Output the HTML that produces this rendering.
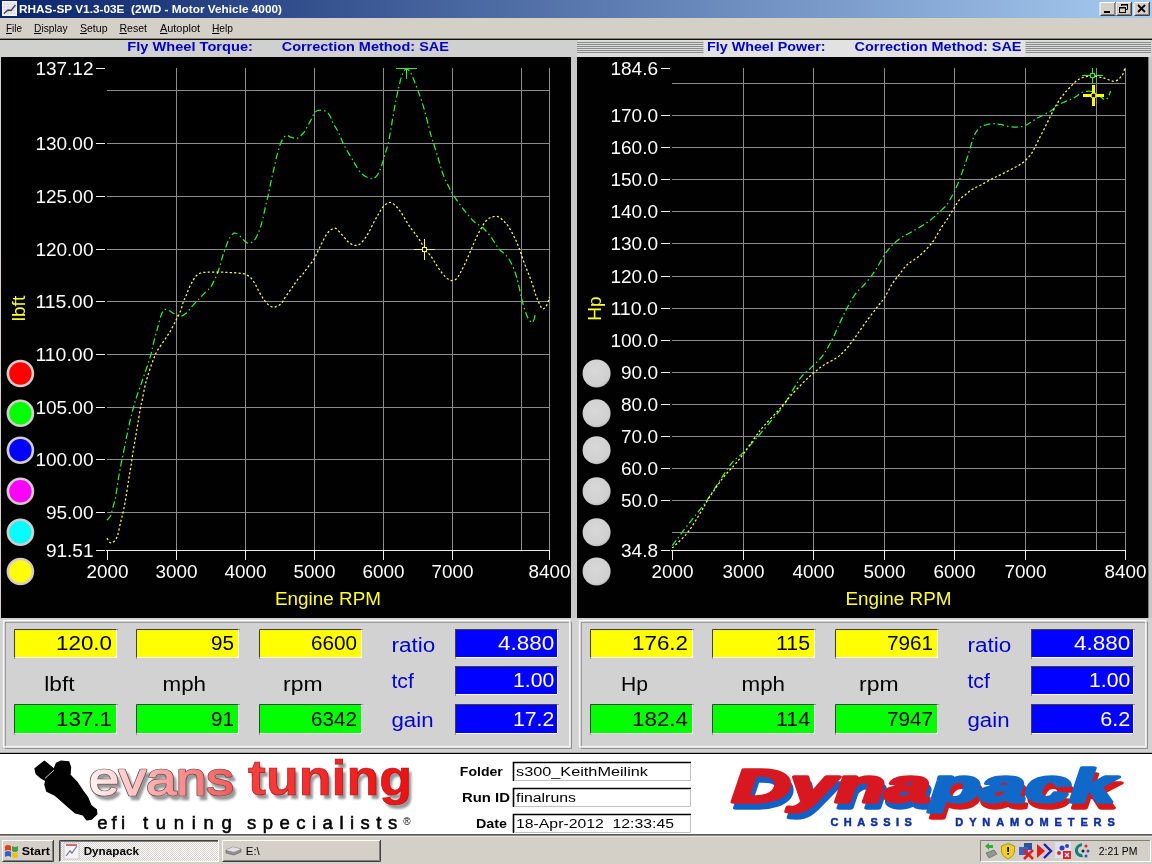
<!DOCTYPE html><html><head><meta charset="utf-8"><title>Dynapack</title>
<style>html,body{margin:0;padding:0;background:#d4d0c8;overflow:hidden}svg{display:block;will-change:transform;opacity:.999}text{font-family:"Liberation Sans",sans-serif;white-space:pre}</style></head><body>
<svg width="1152" height="864" viewBox="0 0 1152 864">
<defs>
<linearGradient id="tb" x1="0" x2="1" y1="0" y2="0"><stop offset="0" stop-color="#0a246a"/><stop offset="1" stop-color="#a6caf0"/></linearGradient>
<pattern id="stripe" width="4" height="2" patternUnits="userSpaceOnUse"><rect width="4" height="2" fill="#dcdcdc"/><rect y="0" width="4" height="1" fill="#8a8a8a"/></pattern>
<pattern id="chk" width="2" height="2" patternUnits="userSpaceOnUse"><rect width="2" height="2" fill="#ffffff"/><rect width="1" height="1" fill="#d4d0c8"/><rect x="1" y="1" width="1" height="1" fill="#d4d0c8"/></pattern>
<linearGradient id="ev1" x1="0" x2="1"><stop offset="0" stop-color="#fff4f4"/><stop offset="1" stop-color="#f85858"/></linearGradient>
<linearGradient id="ev2" x1="0" x2="1"><stop offset="0" stop-color="#f84040"/><stop offset="1" stop-color="#ec1010"/></linearGradient>
<radialGradient id="gb" cx=".45" cy=".4" r=".6"><stop offset="0" stop-color="#d8d8d8"/><stop offset=".85" stop-color="#d0d0d0"/><stop offset="1" stop-color="#bcbcbc"/></radialGradient>
<filter id="sh" x="-5%" y="-10%" width="115%" height="130%"><feGaussianBlur stdDeviation="1.2"/></filter>
</defs>
<rect width="1152" height="864" fill="#d4d0c8"/>
<rect x="0" y="0" width="1152" height="18" fill="url(#tb)"/>
<rect x="2" y="1" width="15" height="15" fill="#f6f4fa"/><path d="M3 4h13M3 7h13M3 10h13M3 13h13M5 2v13M8 2v13M11 2v13M14 2v13" stroke="#d2d0e0" stroke-width=".7" fill="none"/><path d="M6 11l3-2l3 1l-3 2z" fill="#d8d0a0"/><path d="M4 13.5L8 10L11 10.5L15.5 5" stroke="#404058" stroke-width="1.3" fill="none"/>
<text x="19" y="13" font-size="11.5" fill="#ffffff" text-anchor="start" font-weight="bold" textLength="263" lengthAdjust="spacingAndGlyphs" >RHAS-SP V1.3-03E  (2WD - Motor Vehicle 4000)</text>
<rect x="1100" y="2" width="16" height="14" fill="#d4d0c8"/>
<path d="M1100 15.5V2.5H1115" stroke="#ffffff" fill="none"/>
<path d="M1100.5 15.5H1115.5V2" stroke="#404040" fill="none"/>
<path d="M1101.5 14.5H1114.5V3" stroke="#808080" fill="none"/>
<rect x="1104" y="11" width="6" height="2" fill="#000"/>
<rect x="1116" y="2" width="16" height="14" fill="#d4d0c8"/>
<path d="M1116 15.5V2.5H1131" stroke="#ffffff" fill="none"/>
<path d="M1116.5 15.5H1131.5V2" stroke="#404040" fill="none"/>
<path d="M1117.5 14.5H1130.5V3" stroke="#808080" fill="none"/>
<path d="M1121.5 6V4.5h6v5H1126" stroke="#000" fill="none"/><rect x="1121" y="4" width="7" height="1.5" fill="#000"/>
<rect x="1119.5" y="7.5" width="6" height="5" stroke="#000" fill="none"/><rect x="1119" y="7" width="7" height="1.5" fill="#000"/>
<rect x="1134" y="2" width="16" height="14" fill="#d4d0c8"/>
<path d="M1134 15.5V2.5H1149" stroke="#ffffff" fill="none"/>
<path d="M1134.5 15.5H1149.5V2" stroke="#404040" fill="none"/>
<path d="M1135.5 14.5H1148.5V3" stroke="#808080" fill="none"/>
<path d="M1138 5l7 7M1145 5l-7 7" stroke="#000" stroke-width="1.8" fill="none"/>
<text x="6" y="32" font-size="11.5" fill="#000" text-anchor="start" font-weight="normal" textLength="16" lengthAdjust="spacingAndGlyphs" >File</text>
<text x="34" y="32" font-size="11.5" fill="#000" text-anchor="start" font-weight="normal" textLength="33.5" lengthAdjust="spacingAndGlyphs" >Display</text>
<text x="80" y="32" font-size="11.5" fill="#000" text-anchor="start" font-weight="normal" textLength="27.5" lengthAdjust="spacingAndGlyphs" >Setup</text>
<text x="119.5" y="32" font-size="11.5" fill="#000" text-anchor="start" font-weight="normal" textLength="27.5" lengthAdjust="spacingAndGlyphs" >Reset</text>
<text x="160" y="32" font-size="11.5" fill="#000" text-anchor="start" font-weight="normal" textLength="40" lengthAdjust="spacingAndGlyphs" >Autoplot</text>
<text x="212" y="32" font-size="11.5" fill="#000" text-anchor="start" font-weight="normal" textLength="21" lengthAdjust="spacingAndGlyphs" >Help</text>
<rect x="6" y="33" width="6" height="1" fill="#000"/>
<rect x="34" y="33" width="7.5" height="1" fill="#000"/>
<rect x="80" y="33" width="7" height="1" fill="#000"/>
<rect x="119.5" y="33" width="7.5" height="1" fill="#000"/>
<rect x="160" y="33" width="7.5" height="1" fill="#000"/>
<rect x="212" y="33" width="7.5" height="1" fill="#000"/>
<rect x="0" y="38.6" width="1152" height="1.4" fill="#101010"/>
<rect x="0" y="40" width="1152" height="17" fill="#d0d0d0"/>
<rect x="577" y="40" width="574" height="17" fill="#dcdcdc"/>
<rect x="577" y="42" width="574" height="11" fill="url(#stripe)"/>
<rect x="703.5" y="40" width="322" height="17" fill="#e2e2e2"/>
<text x="127.3" y="50.7" font-size="13" fill="#0000c8" text-anchor="start" font-weight="bold" textLength="125.6" lengthAdjust="spacingAndGlyphs" >Fly Wheel Torque:</text>
<text x="281.7" y="50.7" font-size="13" fill="#0000c8" text-anchor="start" font-weight="bold" textLength="167.2" lengthAdjust="spacingAndGlyphs" >Correction Method: SAE</text>
<text x="707" y="50.7" font-size="13" fill="#0000c8" text-anchor="start" font-weight="bold" textLength="118.5" lengthAdjust="spacingAndGlyphs" >Fly Wheel Power:</text>
<text x="854.5" y="50.7" font-size="13" fill="#0000c8" text-anchor="start" font-weight="bold" textLength="167" lengthAdjust="spacingAndGlyphs" >Correction Method: SAE</text>
<rect x="1" y="57" width="570" height="561" fill="#000"/>
<rect x="577" y="57" width="571.6" height="561.6" fill="#000"/>
<rect x="571" y="57" width="6" height="561" fill="#c8c8c8"/>
<rect x="1148.6" y="57" width="4" height="561" fill="#c8c8c8"/>
<path d="M176.5 68V550M245.5 68V550M314.5 68V550M383.5 68V550M452.5 68V550M521.5 68V550M549.5 68V550M107 90.5H550M107 143.5H550M107 196.5H550M107 249.5H550M107 301.5H550M107 354.5H550M107 407.5H550M107 459.5H550M107 512.5H550" stroke="#8c8c8c" stroke-width="1" fill="none" shape-rendering="crispEdges"/>
<path d="M106 550.5H550" stroke="#e8e8e8" stroke-width="1" shape-rendering="crispEdges"/>
<path d="M107.5 550V560M176.5 550V560M245.5 550V560M314.5 550V560M383.5 550V560M452.5 550V560M549.5 550V560M96 68.5H105M96 143.5H105M96 196.5H105M96 249.5H105M96 301.5H105M96 354.5H105M96 407.5H105M96 459.5H105M96 512.5H105M96 550.5H105" stroke="#f0f0f0" stroke-width="1" shape-rendering="crispEdges"/>
<text x="93.5" y="74.8" font-size="19" fill="#fff" text-anchor="end" font-weight="normal" textLength="58.1" lengthAdjust="spacingAndGlyphs" >137.12</text>
<text x="93.5" y="149.8" font-size="19" fill="#fff" text-anchor="end" font-weight="normal" textLength="58.1" lengthAdjust="spacingAndGlyphs" >130.00</text>
<text x="93.5" y="202.8" font-size="19" fill="#fff" text-anchor="end" font-weight="normal" textLength="58.1" lengthAdjust="spacingAndGlyphs" >125.00</text>
<text x="93.5" y="255.8" font-size="19" fill="#fff" text-anchor="end" font-weight="normal" textLength="58.1" lengthAdjust="spacingAndGlyphs" >120.00</text>
<text x="93.5" y="307.8" font-size="19" fill="#fff" text-anchor="end" font-weight="normal" textLength="58.1" lengthAdjust="spacingAndGlyphs" >115.00</text>
<text x="93.5" y="360.8" font-size="19" fill="#fff" text-anchor="end" font-weight="normal" textLength="58.1" lengthAdjust="spacingAndGlyphs" >110.00</text>
<text x="93.5" y="413.8" font-size="19" fill="#fff" text-anchor="end" font-weight="normal" textLength="58.1" lengthAdjust="spacingAndGlyphs" >105.00</text>
<text x="93.5" y="465.8" font-size="19" fill="#fff" text-anchor="end" font-weight="normal" textLength="58.1" lengthAdjust="spacingAndGlyphs" >100.00</text>
<text x="93.5" y="518.8" font-size="19" fill="#fff" text-anchor="end" font-weight="normal" textLength="47.6" lengthAdjust="spacingAndGlyphs" >95.00</text>
<text x="93.5" y="556.8" font-size="19" fill="#fff" text-anchor="end" font-weight="normal" textLength="47.6" lengthAdjust="spacingAndGlyphs" >91.51</text>
<text x="107.5" y="577.5" font-size="19" fill="#fff" text-anchor="middle" font-weight="normal" textLength="42" lengthAdjust="spacingAndGlyphs" >2000</text>
<text x="176.5" y="577.5" font-size="19" fill="#fff" text-anchor="middle" font-weight="normal" textLength="42" lengthAdjust="spacingAndGlyphs" >3000</text>
<text x="245.5" y="577.5" font-size="19" fill="#fff" text-anchor="middle" font-weight="normal" textLength="42" lengthAdjust="spacingAndGlyphs" >4000</text>
<text x="314.5" y="577.5" font-size="19" fill="#fff" text-anchor="middle" font-weight="normal" textLength="42" lengthAdjust="spacingAndGlyphs" >5000</text>
<text x="383.5" y="577.5" font-size="19" fill="#fff" text-anchor="middle" font-weight="normal" textLength="42" lengthAdjust="spacingAndGlyphs" >6000</text>
<text x="452.5" y="577.5" font-size="19" fill="#fff" text-anchor="middle" font-weight="normal" textLength="42" lengthAdjust="spacingAndGlyphs" >7000</text>
<text x="549.5" y="577.5" font-size="19" fill="#fff" text-anchor="middle" font-weight="normal" textLength="42" lengthAdjust="spacingAndGlyphs" >8400</text>
<text x="328.0" y="605" font-size="18" fill="#ffff30" text-anchor="middle" font-weight="normal" textLength="106" lengthAdjust="spacingAndGlyphs" >Engine RPM</text>
<text transform="translate(24.5,308.5) rotate(-90)" font-size="19" fill="#ffff30" text-anchor="middle">lbft</text>
<path d="M743.5 68V550M813.5 68V550M884.5 68V550M954.5 68V550M1025.5 68V550M1096.5 68V550M1125.5 68V550M672 83.5H1126M672 115.5H1126M672 147.5H1126M672 179.5H1126M672 211.5H1126M672 243.5H1126M672 276.5H1126M672 308.5H1126M672 340.5H1126M672 372.5H1126M672 404.5H1126M672 436.5H1126M672 468.5H1126M672 500.5H1126M672 532.5H1126" stroke="#8c8c8c" stroke-width="1" fill="none" shape-rendering="crispEdges"/>
<path d="M671 550.5H1126" stroke="#e8e8e8" stroke-width="1" shape-rendering="crispEdges"/>
<path d="M672.5 550V560M743.5 550V560M813.5 550V560M884.5 550V560M954.5 550V560M1025.5 550V560M1125.5 550V560M661 68.5H670M661 115.5H670M661 147.5H670M661 179.5H670M661 211.5H670M661 243.5H670M661 276.5H670M661 308.5H670M661 340.5H670M661 372.5H670M661 404.5H670M661 436.5H670M661 468.5H670M661 500.5H670M661 550.5H670" stroke="#f0f0f0" stroke-width="1" shape-rendering="crispEdges"/>
<text x="658" y="74.8" font-size="19" fill="#fff" text-anchor="end" font-weight="normal" textLength="47.6" lengthAdjust="spacingAndGlyphs" >184.6</text>
<text x="658" y="121.8" font-size="19" fill="#fff" text-anchor="end" font-weight="normal" textLength="47.6" lengthAdjust="spacingAndGlyphs" >170.0</text>
<text x="658" y="153.8" font-size="19" fill="#fff" text-anchor="end" font-weight="normal" textLength="47.6" lengthAdjust="spacingAndGlyphs" >160.0</text>
<text x="658" y="185.8" font-size="19" fill="#fff" text-anchor="end" font-weight="normal" textLength="47.6" lengthAdjust="spacingAndGlyphs" >150.0</text>
<text x="658" y="217.8" font-size="19" fill="#fff" text-anchor="end" font-weight="normal" textLength="47.6" lengthAdjust="spacingAndGlyphs" >140.0</text>
<text x="658" y="249.8" font-size="19" fill="#fff" text-anchor="end" font-weight="normal" textLength="47.6" lengthAdjust="spacingAndGlyphs" >130.0</text>
<text x="658" y="282.8" font-size="19" fill="#fff" text-anchor="end" font-weight="normal" textLength="47.6" lengthAdjust="spacingAndGlyphs" >120.0</text>
<text x="658" y="314.8" font-size="19" fill="#fff" text-anchor="end" font-weight="normal" textLength="47.6" lengthAdjust="spacingAndGlyphs" >110.0</text>
<text x="658" y="346.8" font-size="19" fill="#fff" text-anchor="end" font-weight="normal" textLength="47.6" lengthAdjust="spacingAndGlyphs" >100.0</text>
<text x="658" y="378.8" font-size="19" fill="#fff" text-anchor="end" font-weight="normal" textLength="37.0" lengthAdjust="spacingAndGlyphs" >90.0</text>
<text x="658" y="410.8" font-size="19" fill="#fff" text-anchor="end" font-weight="normal" textLength="37.0" lengthAdjust="spacingAndGlyphs" >80.0</text>
<text x="658" y="442.8" font-size="19" fill="#fff" text-anchor="end" font-weight="normal" textLength="37.0" lengthAdjust="spacingAndGlyphs" >70.0</text>
<text x="658" y="474.8" font-size="19" fill="#fff" text-anchor="end" font-weight="normal" textLength="37.0" lengthAdjust="spacingAndGlyphs" >60.0</text>
<text x="658" y="506.8" font-size="19" fill="#fff" text-anchor="end" font-weight="normal" textLength="37.0" lengthAdjust="spacingAndGlyphs" >50.0</text>
<text x="658" y="556.8" font-size="19" fill="#fff" text-anchor="end" font-weight="normal" textLength="37.0" lengthAdjust="spacingAndGlyphs" >34.8</text>
<text x="672.5" y="577.5" font-size="19" fill="#fff" text-anchor="middle" font-weight="normal" textLength="42" lengthAdjust="spacingAndGlyphs" >2000</text>
<text x="743.5" y="577.5" font-size="19" fill="#fff" text-anchor="middle" font-weight="normal" textLength="42" lengthAdjust="spacingAndGlyphs" >3000</text>
<text x="813.5" y="577.5" font-size="19" fill="#fff" text-anchor="middle" font-weight="normal" textLength="42" lengthAdjust="spacingAndGlyphs" >4000</text>
<text x="884.5" y="577.5" font-size="19" fill="#fff" text-anchor="middle" font-weight="normal" textLength="42" lengthAdjust="spacingAndGlyphs" >5000</text>
<text x="954.5" y="577.5" font-size="19" fill="#fff" text-anchor="middle" font-weight="normal" textLength="42" lengthAdjust="spacingAndGlyphs" >6000</text>
<text x="1025.5" y="577.5" font-size="19" fill="#fff" text-anchor="middle" font-weight="normal" textLength="42" lengthAdjust="spacingAndGlyphs" >7000</text>
<text x="1125.5" y="577.5" font-size="19" fill="#fff" text-anchor="middle" font-weight="normal" textLength="42" lengthAdjust="spacingAndGlyphs" >8400</text>
<text x="898.5" y="605" font-size="18" fill="#ffff30" text-anchor="middle" font-weight="normal" textLength="106" lengthAdjust="spacingAndGlyphs" >Engine RPM</text>
<text transform="translate(601,308.5) rotate(-90)" font-size="19" fill="#ffff30" text-anchor="middle">Hp</text>
<path d="M107.0 520.0C107.6 519.2 109.9 517.3 110.8 515.5C111.7 513.7 111.7 512.1 112.5 509.0C113.3 505.9 114.5 502.7 115.6 497.0C116.7 491.3 117.9 481.2 119.0 475.0C120.1 468.8 120.8 465.3 122.0 459.5C123.2 453.7 124.9 445.4 126.0 440.0C127.1 434.6 127.6 431.5 128.6 427.0C129.6 422.5 130.8 417.5 132.0 413.0C133.2 408.5 133.8 405.5 135.6 400.0C137.3 394.5 140.2 386.8 142.5 380.0C144.8 373.2 147.6 365.7 149.5 359.4C151.4 353.1 152.4 347.5 153.8 342.0C155.2 336.5 156.7 331.1 158.0 326.4C159.3 321.7 160.4 316.8 161.6 314.0C162.8 311.2 163.7 309.9 165.0 309.4C166.3 308.9 167.8 310.0 169.4 310.8C171.0 311.6 172.7 313.1 174.6 314.0C176.5 314.9 178.7 316.6 180.7 316.3C182.7 316.1 184.9 314.1 186.8 312.5C188.7 310.9 190.1 308.5 192.0 306.4C193.9 304.3 195.7 302.4 198.0 300.0C200.3 297.6 203.8 293.9 206.0 291.7C208.2 289.4 209.4 288.8 211.0 286.5C212.6 284.2 214.0 281.1 215.5 277.8C217.0 274.5 218.7 270.0 219.8 266.5C221.0 263.0 221.6 259.8 222.4 257.0C223.2 254.2 223.8 252.7 224.8 250.0C225.8 247.3 227.0 243.5 228.2 241.0C229.3 238.5 230.5 236.3 231.7 235.0C232.9 233.7 233.8 232.8 235.2 233.0C236.6 233.2 238.8 235.1 240.4 236.5C242.0 237.9 243.3 240.1 244.7 241.2C246.1 242.3 247.4 243.5 249.0 243.3C250.6 243.2 252.9 241.8 254.3 240.3C255.8 238.8 256.6 236.6 257.7 234.3C258.8 232.0 259.8 229.2 260.7 226.5C261.6 223.8 262.2 221.1 263.0 217.8C263.8 214.5 264.7 210.0 265.5 206.5C266.3 203.0 267.1 199.9 267.8 197.0C268.5 194.1 268.9 192.1 269.5 189.0C270.1 185.9 270.9 181.7 271.6 178.5C272.3 175.3 273.0 172.8 273.7 169.9C274.4 167.0 274.9 164.2 275.6 161.2C276.3 158.1 277.1 154.8 278.0 151.6C278.9 148.4 280.1 144.5 281.2 142.0C282.3 139.5 283.6 137.6 284.7 136.5C285.8 135.4 286.6 135.4 287.6 135.5C288.6 135.6 289.2 136.7 290.7 137.2C292.2 137.7 295.1 138.6 296.8 138.3C298.5 138.0 299.7 136.6 301.0 135.5C302.3 134.4 303.6 133.1 304.6 131.7C305.6 130.2 306.2 128.7 307.2 126.8C308.2 124.9 309.5 122.6 310.7 120.4C311.9 118.2 313.0 115.1 314.2 113.4C315.4 111.8 316.0 111.0 317.6 110.5C319.2 110.0 321.8 109.9 323.7 110.5C325.6 111.1 327.4 112.1 329.0 114.3C330.6 116.5 332.0 120.9 333.6 123.9C335.2 126.9 336.9 129.2 338.5 132.5C340.1 135.8 341.9 140.8 343.3 143.8C344.8 146.9 345.7 148.2 347.2 150.8C348.7 153.4 351.1 157.1 352.4 159.4C353.7 161.7 353.9 162.3 355.2 164.4C356.5 166.5 358.7 170.2 360.4 172.2C362.1 174.2 363.7 175.4 365.6 176.5C367.5 177.6 370.1 178.4 371.7 178.6C373.3 178.8 374.0 178.3 375.2 177.4C376.4 176.5 377.5 175.2 378.6 173.0C379.7 170.8 380.8 167.9 382.0 164.4C383.2 160.9 384.6 155.7 385.6 152.2C386.6 148.7 387.3 147.2 388.2 143.5C389.1 139.8 389.9 134.6 390.8 129.7C391.7 124.8 392.5 119.0 393.4 114.0C394.3 109.0 395.1 104.3 396.0 100.0C396.9 95.7 397.7 91.7 398.6 88.0C399.5 84.3 400.3 80.3 401.2 77.6C402.1 74.8 402.9 73.0 403.8 71.5C404.7 70.0 405.4 68.9 406.4 68.9C407.4 68.9 409.0 70.2 410.0 71.5C411.0 72.8 411.7 74.8 412.5 76.7C413.3 78.6 414.0 80.2 415.0 82.8C416.0 85.4 417.4 89.1 418.6 92.3C419.8 95.5 420.9 98.3 422.0 101.9C423.1 105.5 424.3 109.7 425.5 114.0C426.7 118.3 428.0 124.1 429.0 128.0C430.0 131.9 430.7 134.6 431.6 137.5C432.5 140.4 433.1 141.7 434.2 145.3C435.3 148.9 437.2 154.9 438.5 159.2C439.8 163.5 440.8 167.8 442.0 171.3C443.2 174.8 444.2 177.1 445.5 180.0C446.8 182.9 448.6 186.3 449.8 188.7C451.1 191.1 451.2 191.7 453.0 194.5C454.8 197.3 458.3 202.5 460.8 205.8C463.3 209.1 465.5 211.8 467.8 214.5C470.1 217.2 472.2 220.1 474.7 222.3C477.1 224.5 479.9 225.2 482.5 227.5C485.1 229.8 488.1 233.4 490.3 236.2C492.5 238.9 493.9 241.7 495.5 244.0C497.1 246.3 498.2 248.1 500.0 250.0C501.8 251.9 504.1 253.1 506.0 255.3C507.9 257.5 509.6 260.0 511.2 263.0C512.8 266.0 514.4 270.3 515.5 273.5C516.6 276.7 517.1 278.7 518.0 282.2C518.9 285.7 519.8 290.6 520.7 294.4C521.6 298.2 522.4 301.6 523.3 304.8C524.2 308.0 525.1 311.2 526.0 313.5C526.9 315.8 527.5 317.2 528.5 318.7C529.5 320.2 531.0 322.5 532.0 322.5C533.0 322.5 533.8 319.9 534.3 318.7C534.8 317.4 534.9 315.6 535.0 315.0" fill="none" stroke="#2cf02c" stroke-width="1.25" stroke-dasharray="6.5 3 1.5 3"/>
<path d="M107.0 538.0C107.3 538.6 108.3 540.7 109.0 541.5C109.7 542.3 110.5 543.0 111.3 543.0C112.1 543.0 113.1 542.3 114.0 541.5C114.9 540.7 115.8 539.2 116.5 538.0C117.2 536.8 117.3 536.8 118.0 534.0C118.7 531.2 119.9 525.3 120.8 521.5C121.7 517.7 122.5 515.1 123.4 511.0C124.3 506.9 125.1 502.2 126.0 497.0C126.9 491.8 127.8 485.2 128.6 480.0C129.4 474.8 130.3 470.7 131.0 466.0C131.7 461.3 132.2 456.8 133.0 452.0C133.8 447.2 134.8 441.7 135.6 437.0C136.4 432.3 137.0 428.7 137.8 424.0C138.6 419.3 139.6 412.7 140.3 408.7C141.0 404.7 141.4 403.6 142.2 400.0C142.9 396.4 144.0 390.6 144.8 387.0C145.6 383.4 146.1 381.7 147.0 378.5C147.9 375.3 149.2 371.3 150.3 368.0C151.4 364.7 152.6 361.4 153.8 358.5C155.0 355.6 155.4 353.9 157.3 350.7C159.2 347.5 162.7 342.8 165.0 339.4C167.3 335.9 169.1 333.3 171.0 330.0C172.9 326.7 174.8 322.6 176.4 319.4C178.0 316.2 179.5 313.7 180.7 310.8C181.8 307.9 182.4 304.5 183.3 302.0C184.2 299.5 185.0 298.4 186.0 296.0C187.0 293.6 188.2 289.9 189.4 287.3C190.6 284.7 191.8 282.3 193.0 280.4C194.2 278.5 195.1 276.9 196.4 275.7C197.7 274.5 198.8 273.6 200.7 273.0C202.6 272.4 203.5 272.3 207.6 272.2C211.7 272.1 219.4 272.1 225.0 272.3C230.6 272.5 237.6 272.9 241.0 273.3C244.4 273.7 244.0 273.8 245.6 274.5C247.2 275.2 249.2 276.0 250.8 277.7C252.5 279.4 254.1 282.2 255.5 284.6C256.9 287.1 258.1 289.9 259.5 292.4C260.9 294.9 262.4 297.4 263.8 299.4C265.2 301.4 266.7 303.3 268.2 304.6C269.7 305.9 271.4 306.9 272.8 307.2C274.2 307.5 275.4 306.9 276.8 306.3C278.2 305.7 279.8 305.1 281.2 303.7C282.6 302.2 283.6 299.8 285.0 297.6C286.4 295.4 288.4 292.9 289.9 290.7C291.4 288.5 292.8 286.6 294.2 284.6C295.6 282.6 297.1 280.2 298.5 278.5C299.9 276.8 301.4 275.9 302.9 274.2C304.3 272.4 305.5 270.3 307.2 268.0C308.9 265.7 311.7 262.7 313.3 260.3C314.9 257.9 315.7 255.7 316.8 253.4C317.9 251.1 319.1 248.7 320.2 246.4C321.3 244.1 322.5 241.7 323.7 239.5C324.9 237.3 326.0 235.0 327.2 233.4C328.4 231.8 329.4 230.9 330.7 230.0C332.0 229.1 333.6 227.9 335.0 228.2C336.4 228.5 337.7 230.1 339.3 231.7C340.9 233.3 342.9 235.9 344.5 237.7C346.1 239.5 347.0 241.0 348.7 242.3C350.4 243.6 352.9 245.1 354.8 245.4C356.7 245.7 358.3 245.2 360.0 244.0C361.7 242.8 363.6 240.2 365.2 238.0C366.8 235.8 368.1 233.6 369.5 231.0C370.9 228.4 372.4 225.1 373.9 222.3C375.3 219.6 376.8 216.9 378.2 214.5C379.6 212.1 381.1 209.4 382.5 207.6C383.9 205.8 385.2 204.6 386.5 203.8C387.8 202.9 388.9 202.2 390.3 202.4C391.7 202.6 393.1 203.6 394.7 205.0C396.3 206.4 398.3 208.7 400.0 211.0C401.7 213.3 403.3 216.2 405.0 218.9C406.7 221.7 408.4 224.8 410.3 227.5C412.2 230.2 414.5 232.7 416.4 235.3C418.3 237.9 420.2 240.8 421.6 243.2C423.0 245.6 423.1 247.6 424.5 249.6C425.9 251.6 428.3 252.8 430.3 255.3C432.3 257.9 434.4 261.9 436.4 264.9C438.4 267.9 440.5 271.2 442.4 273.5C444.3 275.8 446.0 277.6 447.6 278.8C449.2 279.9 450.5 280.5 452.0 280.5C453.5 280.5 455.0 280.2 456.5 278.8C458.0 277.2 459.5 274.2 461.0 271.5C462.5 268.8 464.2 265.3 465.5 262.5C466.8 259.7 467.8 257.2 469.0 254.5C470.2 251.8 471.4 249.2 472.5 246.5C473.6 243.8 474.9 240.8 475.9 238.5C476.9 236.2 477.6 234.8 478.6 233.0C479.6 231.2 480.6 229.4 481.7 227.5C482.8 225.6 484.2 223.1 485.5 221.5C486.8 219.9 488.1 218.8 489.5 218.0C490.9 217.2 492.2 216.8 493.8 216.6C495.4 216.4 497.3 216.2 499.0 217.0C500.7 217.8 502.6 219.9 504.2 221.5C505.8 223.1 507.1 224.5 508.6 226.7C510.1 228.9 511.7 232.1 513.0 234.5C514.3 236.9 515.3 239.0 516.4 241.4C517.5 243.8 518.5 246.4 519.5 249.2C520.5 252.0 521.4 254.9 522.5 258.0C523.6 261.1 524.9 264.5 526.0 267.5C527.1 270.5 528.2 273.0 529.4 276.0C530.5 279.0 531.9 282.6 532.9 285.7C533.9 288.8 534.6 291.9 535.5 294.4C536.4 296.9 537.1 298.5 538.0 300.5C538.9 302.5 539.9 305.1 540.7 306.5C541.5 307.9 541.9 309.0 542.8 309.0C543.7 309.0 545.0 307.9 546.0 306.5C547.0 305.1 547.9 302.1 548.5 300.5C549.1 298.9 549.3 297.6 549.5 297.0" fill="none" stroke="#ffff3c" stroke-width="1.25" stroke-dasharray="2.2 2.2"/>
<path d="M672.3 545.6C675.1 541.8 683.8 530.1 689.3 523.0C694.8 515.9 700.4 509.4 705.0 503.0C709.6 496.6 712.5 491.6 717.0 484.9C721.5 478.2 727.3 468.5 731.8 463.0C736.3 457.5 739.4 456.6 744.0 451.9C748.6 447.1 754.5 440.3 759.6 434.5C764.7 428.7 770.3 421.9 774.4 417.0C778.5 412.1 781.5 408.6 784.0 405.0C786.5 401.4 787.4 398.9 789.5 395.4C791.6 391.9 794.5 387.2 796.5 384.0C798.5 380.8 799.2 379.0 801.7 376.3C804.2 373.6 808.0 370.7 811.2 367.6C814.4 364.6 818.2 361.0 820.8 358.0C823.4 355.0 824.8 352.7 826.8 349.4C828.8 346.1 831.1 341.8 833.0 338.0C834.9 334.2 836.3 330.5 838.0 326.8C839.7 323.1 841.8 318.6 843.3 315.6C844.8 312.6 845.5 311.1 846.8 308.6C848.1 306.1 849.3 303.6 851.0 300.8C852.7 298.0 854.8 294.6 857.0 292.0C859.2 289.4 861.7 287.6 864.0 285.0C866.3 282.4 868.8 279.5 871.0 276.5C873.2 273.5 875.2 270.6 877.4 267.0C879.6 263.4 882.1 258.3 884.3 255.0C886.5 251.7 888.5 249.4 890.4 247.2C892.3 245.0 893.6 243.7 895.6 242.0C897.6 240.3 899.8 238.5 902.5 236.8C905.2 235.1 908.7 233.5 912.0 231.6C915.3 229.7 919.3 227.5 922.5 225.5C925.7 223.5 928.3 221.7 931.2 219.4C934.1 217.1 937.3 214.1 939.9 211.6C942.5 209.1 944.8 207.3 946.8 204.7C948.8 202.1 950.5 198.6 952.0 196.0C953.5 193.4 954.3 191.5 955.5 189.0C956.7 186.5 957.9 184.1 959.0 181.2C960.1 178.3 961.2 175.0 962.4 171.7C963.6 168.4 964.8 164.7 966.0 161.2C967.2 157.8 968.3 154.3 969.4 150.8C970.5 147.3 971.5 143.1 972.6 140.0C973.7 136.9 974.7 134.4 976.0 132.2C977.3 130.1 978.8 128.2 980.4 127.0C982.0 125.8 983.4 125.6 985.6 125.0C987.8 124.4 991.0 123.7 993.4 123.6C995.8 123.5 997.7 123.9 1000.3 124.4C1002.9 124.9 1006.1 126.1 1009.0 126.5C1011.9 126.9 1015.1 127.1 1017.7 127.0C1020.3 126.9 1022.4 126.6 1024.7 125.7C1027.0 124.8 1029.3 123.2 1031.6 121.8C1033.9 120.4 1036.2 118.8 1038.5 117.5C1040.8 116.2 1043.2 115.3 1045.5 114.0C1047.8 112.7 1050.4 111.2 1052.4 109.7C1054.4 108.2 1055.6 106.6 1057.6 105.3C1059.6 104.0 1062.3 102.9 1064.6 101.9C1066.9 100.9 1069.3 100.1 1071.3 99.2C1073.3 98.3 1075.0 97.4 1076.6 96.3C1078.2 95.2 1079.3 93.5 1081.0 92.7C1082.7 91.9 1084.9 91.5 1086.7 91.3C1088.5 91.1 1090.1 90.9 1092.0 91.5C1093.9 92.1 1096.0 93.7 1098.0 95.0C1100.0 96.3 1102.4 98.5 1103.8 99.2C1105.1 99.9 1105.4 99.9 1106.2 99.4C1107.0 98.9 1107.9 97.7 1108.6 96.3C1109.3 94.9 1110.3 91.9 1110.6 91.0" fill="none" stroke="#2cf02c" stroke-width="1.25" stroke-dasharray="6.5 3 1.5 3"/>
<path d="M672.3 548.0C674.8 545.4 682.7 538.8 687.6 532.6C692.5 526.4 698.0 516.6 701.5 511.0C705.0 505.4 704.9 504.1 708.4 498.8C711.9 493.4 718.0 484.4 722.3 478.8C726.6 473.2 730.9 469.1 734.4 465.0C737.9 460.9 739.5 459.2 743.0 454.5C746.5 449.8 751.8 441.8 755.3 437.0C758.8 432.2 760.2 430.1 764.0 425.8C767.8 421.5 774.6 414.5 777.8 411.0C781.0 407.5 780.8 407.6 783.0 405.0C785.2 402.4 787.6 399.2 791.0 395.4C794.4 391.6 799.6 386.2 803.4 382.4C807.2 378.6 810.4 375.7 813.8 372.8C817.2 369.9 820.2 367.5 824.0 365.0C827.8 362.5 832.9 360.4 836.4 358.0C839.9 355.6 842.2 353.2 845.0 350.3C847.8 347.4 850.4 343.9 853.0 340.4C855.6 336.9 858.0 333.2 860.7 329.4C863.4 325.5 866.5 321.2 869.4 317.3C872.3 313.4 875.5 309.3 878.0 306.0C880.5 302.7 882.4 300.9 884.7 297.3C887.0 293.7 889.6 288.1 892.0 284.3C894.4 280.5 896.8 277.6 899.0 274.8C901.2 271.9 903.2 269.0 905.0 267.0C906.8 265.0 907.5 264.4 909.5 262.8C911.5 261.2 914.7 259.6 917.3 257.6C919.9 255.6 922.5 253.2 925.0 250.7C927.5 248.2 930.1 245.2 932.0 242.8C933.9 240.4 934.8 238.6 936.4 236.0C938.0 233.4 940.0 229.7 941.6 227.2C943.2 224.7 944.5 223.2 946.0 221.0C947.5 218.8 948.9 216.5 950.3 214.2C951.7 211.9 953.1 209.6 954.6 207.2C956.1 204.9 957.1 202.5 959.0 200.3C960.9 198.1 963.7 196.1 966.0 194.2C968.3 192.3 970.2 190.6 972.8 189.0C975.4 187.4 978.4 186.4 981.5 184.7C984.6 183.0 988.3 180.8 991.7 179.0C995.1 177.2 998.2 175.9 1002.0 174.0C1005.8 172.1 1010.7 169.7 1014.2 167.8C1017.7 165.9 1020.4 164.6 1023.0 162.6C1025.6 160.6 1028.0 158.0 1029.9 155.7C1031.8 153.4 1032.8 151.4 1034.2 148.8C1035.6 146.1 1036.9 143.2 1038.5 140.0C1040.1 136.8 1042.0 133.2 1043.8 129.7C1045.5 126.2 1047.3 122.7 1049.0 119.2C1050.7 115.7 1052.5 112.0 1054.2 108.8C1055.9 105.6 1057.7 102.6 1059.4 100.0C1061.1 97.4 1062.9 95.3 1064.6 93.2C1066.3 91.1 1068.0 89.4 1069.8 87.5C1071.6 85.6 1073.8 83.1 1075.4 81.7C1077.0 80.3 1077.8 79.8 1079.4 79.0C1081.0 78.2 1082.8 77.5 1085.0 76.9C1087.2 76.4 1089.8 75.6 1092.4 75.7C1095.0 75.8 1098.3 76.8 1100.5 77.3C1102.7 77.8 1103.9 78.0 1105.4 78.5C1106.9 79.0 1108.1 79.6 1109.4 80.1C1110.8 80.6 1112.2 81.3 1113.5 81.3C1114.8 81.3 1116.3 80.8 1117.5 80.1C1118.7 79.4 1119.8 78.0 1120.8 76.9C1121.8 75.8 1122.5 75.1 1123.2 73.6C1123.9 72.1 1124.5 68.9 1124.8 68.0" fill="none" stroke="#ffff3c" stroke-width="1.25" stroke-dasharray="2.2 2.2"/>
<path d="M396 68.5H417M406.5 68V79" stroke="#2cf02c" stroke-width="1" shape-rendering="crispEdges"/>
<path d="M414 249.5H435M424.5 239V260" stroke="#ffff3c" stroke-width="1" shape-rendering="crispEdges"/><rect x="422.5" y="247.5" width="4" height="4" fill="#000" stroke="#ffff3c"/>
<path d="M1082 75.5H1103M1092.5 68V84" stroke="#2cf02c" stroke-width="1" shape-rendering="crispEdges"/><rect x="1090.5" y="73.5" width="4" height="4" fill="#000" stroke="#2cf02c"/>
<path d="M1083 95.5H1104M1093.5 85V106" stroke="#ffff00" stroke-width="3" shape-rendering="crispEdges"/><rect x="1091.5" y="93.5" width="4" height="4" fill="#000" stroke="#d0d000"/>
<circle cx="20.4" cy="373.5" r="13.8" fill="#d4cccc"/><circle cx="20.4" cy="373.5" r="11.2" fill="#ff0000"/>
<circle cx="20.4" cy="413.3" r="13.8" fill="#d4cccc"/><circle cx="20.4" cy="413.3" r="11.2" fill="#00ff00"/>
<circle cx="20.4" cy="450.2" r="13.8" fill="#d4cccc"/><circle cx="20.4" cy="450.2" r="11.2" fill="#0000ff"/>
<circle cx="20.4" cy="491.3" r="13.8" fill="#d4cccc"/><circle cx="20.4" cy="491.3" r="11.2" fill="#ff00ff"/>
<circle cx="20.4" cy="532.3" r="13.8" fill="#d4cccc"/><circle cx="20.4" cy="532.3" r="11.2" fill="#00ffff"/>
<circle cx="20.4" cy="571.5" r="13.8" fill="#d4cccc"/><circle cx="20.4" cy="571.5" r="11.2" fill="#ffff00"/>
<circle cx="596.6" cy="373.5" r="14" fill="url(#gb)"/>
<circle cx="596.6" cy="413.3" r="14" fill="url(#gb)"/>
<circle cx="596.6" cy="450.2" r="14" fill="url(#gb)"/>
<circle cx="596.6" cy="491.3" r="14" fill="url(#gb)"/>
<circle cx="596.6" cy="532.3" r="14" fill="url(#gb)"/>
<circle cx="596.6" cy="571.5" r="14" fill="url(#gb)"/>
<rect x="0" y="618" width="1152" height="136" fill="#d2d2d2"/>
<rect x="0" y="752.8" width="1152" height="1.3" fill="#000"/>
<rect x="5.3" y="622.3" width="566.2" height="126.1" fill="none" stroke="#8c8c8c"/>
<rect x="3.6" y="620.6" width="566.2" height="126.2" fill="none" stroke="#f6f6f6" stroke-width="1.5"/>
<rect x="14" y="629" width="103" height="29" fill="#ffff00"/>
<path d="M14 658V629H117" fill="none" stroke="#404040" stroke-width="1" transform="translate(.5,.5)"/>
<path d="M14 657H116V629" fill="none" stroke="#ffffff" stroke-width="1" transform="translate(.5,.5)"/>
<rect x="14" y="704" width="103" height="30" fill="#00ff00"/>
<path d="M14 734V704H117" fill="none" stroke="#404040" stroke-width="1" transform="translate(.5,.5)"/>
<path d="M14 733H116V704" fill="none" stroke="#ffffff" stroke-width="1" transform="translate(.5,.5)"/>
<rect x="136" y="629" width="103" height="29" fill="#ffff00"/>
<path d="M136 658V629H239" fill="none" stroke="#404040" stroke-width="1" transform="translate(.5,.5)"/>
<path d="M136 657H238V629" fill="none" stroke="#ffffff" stroke-width="1" transform="translate(.5,.5)"/>
<rect x="136" y="704" width="103" height="30" fill="#00ff00"/>
<path d="M136 734V704H239" fill="none" stroke="#404040" stroke-width="1" transform="translate(.5,.5)"/>
<path d="M136 733H238V704" fill="none" stroke="#ffffff" stroke-width="1" transform="translate(.5,.5)"/>
<rect x="259" y="629" width="103" height="29" fill="#ffff00"/>
<path d="M259 658V629H362" fill="none" stroke="#404040" stroke-width="1" transform="translate(.5,.5)"/>
<path d="M259 657H361V629" fill="none" stroke="#ffffff" stroke-width="1" transform="translate(.5,.5)"/>
<rect x="259" y="704" width="103" height="30" fill="#00ff00"/>
<path d="M259 734V704H362" fill="none" stroke="#404040" stroke-width="1" transform="translate(.5,.5)"/>
<path d="M259 733H361V704" fill="none" stroke="#ffffff" stroke-width="1" transform="translate(.5,.5)"/>
<text x="112" y="649.7" font-size="20" fill="#000" text-anchor="end" font-weight="normal" textLength="56" lengthAdjust="spacingAndGlyphs" >120.0</text>
<text x="234" y="649.7" font-size="20" fill="#000" text-anchor="end" font-weight="normal" textLength="23" lengthAdjust="spacingAndGlyphs" >95</text>
<text x="357" y="649.7" font-size="20" fill="#000" text-anchor="end" font-weight="normal" textLength="46" lengthAdjust="spacingAndGlyphs" >6600</text>
<text x="112" y="725.9" font-size="20" fill="#000" text-anchor="end" font-weight="normal" textLength="56" lengthAdjust="spacingAndGlyphs" >137.1</text>
<text x="234" y="725.9" font-size="20" fill="#000" text-anchor="end" font-weight="normal" textLength="23" lengthAdjust="spacingAndGlyphs" >91</text>
<text x="357" y="725.9" font-size="20" fill="#000" text-anchor="end" font-weight="normal" textLength="46" lengthAdjust="spacingAndGlyphs" >6342</text>
<text x="44.3" y="691" font-size="20" fill="#000" text-anchor="start" font-weight="normal" textLength="30.3" lengthAdjust="spacingAndGlyphs" >lbft</text>
<text x="162.5" y="691" font-size="20" fill="#000" text-anchor="start" font-weight="normal" textLength="43.5" lengthAdjust="spacingAndGlyphs" >mph</text>
<text x="283" y="691" font-size="20" fill="#000" text-anchor="start" font-weight="normal" textLength="39.5" lengthAdjust="spacingAndGlyphs" >rpm</text>
<text x="391.5" y="651.7" font-size="20" fill="#0000d0" text-anchor="start" font-weight="normal" textLength="43.8" lengthAdjust="spacingAndGlyphs" >ratio</text>
<text x="391.5" y="688.3" font-size="20" fill="#0000d0" text-anchor="start" font-weight="normal" textLength="22.3" lengthAdjust="spacingAndGlyphs" >tcf</text>
<text x="391.5" y="726.8" font-size="20" fill="#0000d0" text-anchor="start" font-weight="normal" textLength="42" lengthAdjust="spacingAndGlyphs" >gain</text>
<rect x="455" y="629" width="103" height="29" fill="#0000ff"/>
<path d="M455 658V629H558" fill="none" stroke="#404040" stroke-width="1" transform="translate(.5,.5)"/>
<path d="M455 657H557V629" fill="none" stroke="#ffffff" stroke-width="1" transform="translate(.5,.5)"/>
<text x="554.2" y="649.9" font-size="20" fill="#fff" text-anchor="end" font-weight="normal" textLength="56.3" lengthAdjust="spacingAndGlyphs" >4.880</text>
<rect x="455" y="666" width="103" height="29" fill="#0000ff"/>
<path d="M455 695V666H558" fill="none" stroke="#404040" stroke-width="1" transform="translate(.5,.5)"/>
<path d="M455 694H557V666" fill="none" stroke="#ffffff" stroke-width="1" transform="translate(.5,.5)"/>
<text x="554.2" y="686.5" font-size="20" fill="#fff" text-anchor="end" font-weight="normal" textLength="41.2" lengthAdjust="spacingAndGlyphs" >1.00</text>
<rect x="455" y="704" width="103" height="30" fill="#0000ff"/>
<path d="M455 734V704H558" fill="none" stroke="#404040" stroke-width="1" transform="translate(.5,.5)"/>
<path d="M455 733H557V704" fill="none" stroke="#ffffff" stroke-width="1" transform="translate(.5,.5)"/>
<text x="554.2" y="725.9" font-size="20" fill="#fff" text-anchor="end" font-weight="normal" textLength="41.2" lengthAdjust="spacingAndGlyphs" >17.2</text>
<rect x="581.3" y="622.3" width="566.2" height="126.1" fill="none" stroke="#8c8c8c"/>
<rect x="579.6" y="620.6" width="566.2" height="126.2" fill="none" stroke="#f6f6f6" stroke-width="1.5"/>
<rect x="590" y="629" width="103" height="29" fill="#ffff00"/>
<path d="M590 658V629H693" fill="none" stroke="#404040" stroke-width="1" transform="translate(.5,.5)"/>
<path d="M590 657H692V629" fill="none" stroke="#ffffff" stroke-width="1" transform="translate(.5,.5)"/>
<rect x="590" y="704" width="103" height="30" fill="#00ff00"/>
<path d="M590 734V704H693" fill="none" stroke="#404040" stroke-width="1" transform="translate(.5,.5)"/>
<path d="M590 733H692V704" fill="none" stroke="#ffffff" stroke-width="1" transform="translate(.5,.5)"/>
<rect x="712" y="629" width="103" height="29" fill="#ffff00"/>
<path d="M712 658V629H815" fill="none" stroke="#404040" stroke-width="1" transform="translate(.5,.5)"/>
<path d="M712 657H814V629" fill="none" stroke="#ffffff" stroke-width="1" transform="translate(.5,.5)"/>
<rect x="712" y="704" width="103" height="30" fill="#00ff00"/>
<path d="M712 734V704H815" fill="none" stroke="#404040" stroke-width="1" transform="translate(.5,.5)"/>
<path d="M712 733H814V704" fill="none" stroke="#ffffff" stroke-width="1" transform="translate(.5,.5)"/>
<rect x="835" y="629" width="103" height="29" fill="#ffff00"/>
<path d="M835 658V629H938" fill="none" stroke="#404040" stroke-width="1" transform="translate(.5,.5)"/>
<path d="M835 657H937V629" fill="none" stroke="#ffffff" stroke-width="1" transform="translate(.5,.5)"/>
<rect x="835" y="704" width="103" height="30" fill="#00ff00"/>
<path d="M835 734V704H938" fill="none" stroke="#404040" stroke-width="1" transform="translate(.5,.5)"/>
<path d="M835 733H937V704" fill="none" stroke="#ffffff" stroke-width="1" transform="translate(.5,.5)"/>
<text x="688" y="649.7" font-size="20" fill="#000" text-anchor="end" font-weight="normal" textLength="56" lengthAdjust="spacingAndGlyphs" >176.2</text>
<text x="810" y="649.7" font-size="20" fill="#000" text-anchor="end" font-weight="normal" textLength="34" lengthAdjust="spacingAndGlyphs" >115</text>
<text x="933" y="649.7" font-size="20" fill="#000" text-anchor="end" font-weight="normal" textLength="46" lengthAdjust="spacingAndGlyphs" >7961</text>
<text x="688" y="725.9" font-size="20" fill="#000" text-anchor="end" font-weight="normal" textLength="56" lengthAdjust="spacingAndGlyphs" >182.4</text>
<text x="810" y="725.9" font-size="20" fill="#000" text-anchor="end" font-weight="normal" textLength="34" lengthAdjust="spacingAndGlyphs" >114</text>
<text x="933" y="725.9" font-size="20" fill="#000" text-anchor="end" font-weight="normal" textLength="46" lengthAdjust="spacingAndGlyphs" >7947</text>
<text x="621" y="691" font-size="20" fill="#000" text-anchor="start" font-weight="normal" textLength="27" lengthAdjust="spacingAndGlyphs" >Hp</text>
<text x="741.5" y="691" font-size="20" fill="#000" text-anchor="start" font-weight="normal" textLength="43.5" lengthAdjust="spacingAndGlyphs" >mph</text>
<text x="859" y="691" font-size="20" fill="#000" text-anchor="start" font-weight="normal" textLength="39.5" lengthAdjust="spacingAndGlyphs" >rpm</text>
<text x="967.5" y="651.7" font-size="20" fill="#0000d0" text-anchor="start" font-weight="normal" textLength="43.8" lengthAdjust="spacingAndGlyphs" >ratio</text>
<text x="967.5" y="688.3" font-size="20" fill="#0000d0" text-anchor="start" font-weight="normal" textLength="22.3" lengthAdjust="spacingAndGlyphs" >tcf</text>
<text x="967.5" y="726.8" font-size="20" fill="#0000d0" text-anchor="start" font-weight="normal" textLength="42" lengthAdjust="spacingAndGlyphs" >gain</text>
<rect x="1031" y="629" width="103" height="29" fill="#0000ff"/>
<path d="M1031 658V629H1134" fill="none" stroke="#404040" stroke-width="1" transform="translate(.5,.5)"/>
<path d="M1031 657H1133V629" fill="none" stroke="#ffffff" stroke-width="1" transform="translate(.5,.5)"/>
<text x="1130.2" y="649.9" font-size="20" fill="#fff" text-anchor="end" font-weight="normal" textLength="56.3" lengthAdjust="spacingAndGlyphs" >4.880</text>
<rect x="1031" y="666" width="103" height="29" fill="#0000ff"/>
<path d="M1031 695V666H1134" fill="none" stroke="#404040" stroke-width="1" transform="translate(.5,.5)"/>
<path d="M1031 694H1133V666" fill="none" stroke="#ffffff" stroke-width="1" transform="translate(.5,.5)"/>
<text x="1130.2" y="686.5" font-size="20" fill="#fff" text-anchor="end" font-weight="normal" textLength="41.2" lengthAdjust="spacingAndGlyphs" >1.00</text>
<rect x="1031" y="704" width="103" height="30" fill="#0000ff"/>
<path d="M1031 734V704H1134" fill="none" stroke="#404040" stroke-width="1" transform="translate(.5,.5)"/>
<path d="M1031 733H1133V704" fill="none" stroke="#ffffff" stroke-width="1" transform="translate(.5,.5)"/>
<text x="1130.2" y="725.9" font-size="20" fill="#fff" text-anchor="end" font-weight="normal" textLength="30" lengthAdjust="spacingAndGlyphs" >6.2</text>
<rect x="0" y="754" width="1152" height="80.5" fill="#ffffff"/>
<rect x="0" y="834.3" width="1152" height="1.4" fill="#202020"/>
<rect x="0" y="835.7" width="1152" height="1" fill="#ffffff"/>
<polygon points="34.9,768.7 44.4,761.1 54.0,769.1 56.3,763.4 61.1,761.1 68.7,761.8 70.6,767.2 70.0,774.8 77.3,782.5 83.0,791.1 87.8,797.7 91.0,805.4 96.4,809.6 96.8,814.0 91.6,819.1 86.8,819.9 83.0,814.9 75.4,813.0 68.7,807.3 61.1,800.6 54.4,794.9 46.7,791.1 44.8,784.4 45.8,780.6 41.4,778.3 36.2,773.9" fill="#000" stroke="#000" stroke-width="1.2" stroke-linejoin="round"/>
<path d="M44.8 778.6L54.0 770.1" stroke="#fff" stroke-width=".8"/>
<g filter="url(#sh)" opacity=".4"><text x="92" y="798.5" font-size="46" fill="#000" stroke="#000" stroke-width="2.4" textLength="144.5" lengthAdjust="spacingAndGlyphs">evans</text><text x="251" y="798.5" font-size="50" font-weight="bold" fill="#000" textLength="164" lengthAdjust="spacingAndGlyphs">tuning</text></g>
<text x="89" y="794.6" font-size="46" fill="#604848" stroke="#604848" stroke-width="2.6" stroke-linejoin="round" textLength="144.5" lengthAdjust="spacingAndGlyphs">evans</text>
<text x="89" y="794.6" font-size="46" fill="url(#ev1)" stroke="url(#ev1)" stroke-width="1.3" stroke-linejoin="round" textLength="144.5" lengthAdjust="spacingAndGlyphs">evans</text>
<text x="248" y="795" font-size="50" font-weight="bold" fill="url(#ev2)" stroke="#a81818" stroke-width=".7" textLength="164" lengthAdjust="spacingAndGlyphs">tuning</text>
<text x="97.2" y="828.6" font-size="18.5" fill="#000" stroke="#000" stroke-width=".55" textLength="27.8" lengthAdjust="spacing">efi</text>
<text x="143" y="828.6" font-size="18.5" fill="#000" stroke="#000" stroke-width=".55" textLength="88.8" lengthAdjust="spacing">tuning</text>
<text x="247" y="828.6" font-size="18.5" fill="#000" stroke="#000" stroke-width=".55" textLength="150.2" lengthAdjust="spacing">specialists</text>
<text x="407" y="825.3" font-size="10" fill="#000" text-anchor="middle" font-weight="normal" >®</text>
<text x="459.8" y="776" font-size="13" fill="#000" text-anchor="start" font-weight="bold" textLength="43" lengthAdjust="spacingAndGlyphs" >Folder</text>
<rect x="513" y="762" width="178" height="19" fill="#fff"/>
<path d="M513.5 781V762.5H691" stroke="#000" stroke-width="1.6" fill="none"/><path d="M514 780.5H690.5V763" stroke="#c0c0c0" fill="none"/>
<text x="516" y="776" font-size="12.5" fill="#000" text-anchor="start" font-weight="normal" textLength="132" lengthAdjust="spacingAndGlyphs" >s300_KeithMeilink</text>
<text x="462" y="802" font-size="13" fill="#000" text-anchor="start" font-weight="bold" textLength="48" lengthAdjust="spacingAndGlyphs" >Run ID</text>
<rect x="513" y="788" width="178" height="19" fill="#fff"/>
<path d="M513.5 807V788.5H691" stroke="#000" stroke-width="1.6" fill="none"/><path d="M514 806.5H690.5V789" stroke="#c0c0c0" fill="none"/>
<text x="516" y="802" font-size="12.5" fill="#000" text-anchor="start" font-weight="normal" textLength="60" lengthAdjust="spacingAndGlyphs" >finalruns</text>
<text x="476" y="828" font-size="13" fill="#000" text-anchor="start" font-weight="bold" textLength="31" lengthAdjust="spacingAndGlyphs" >Date</text>
<rect x="513" y="814" width="178" height="19" fill="#fff"/>
<path d="M513.5 833V814.5H691" stroke="#000" stroke-width="1.6" fill="none"/><path d="M514 832.5H690.5V815" stroke="#c0c0c0" fill="none"/>
<text x="516" y="828" font-size="12.5" fill="#000" text-anchor="start" font-weight="normal" textLength="158" lengthAdjust="spacingAndGlyphs" >18-Apr-2012  12:33:45</text>
<g transform="translate(2.5,6)">
<text x="732" y="801.5" font-size="46" font-weight="bold" font-style="italic" fill="#1060c8" stroke="#1060c8" stroke-width="3.4" stroke-linejoin="round" textLength="198" lengthAdjust="spacingAndGlyphs">Dyna</text>
<text x="931" y="801.5" font-size="46" font-weight="bold" font-style="italic" fill="#d81818" stroke="#d81818" stroke-width="3.4" stroke-linejoin="round" textLength="184" lengthAdjust="spacingAndGlyphs">pack</text>
</g>
<g transform="translate(0,0)">
<text x="732" y="801.5" font-size="46" font-weight="bold" font-style="italic" fill="#d81820" stroke="#d81820" stroke-width="3.4" stroke-linejoin="round" textLength="198" lengthAdjust="spacingAndGlyphs">Dyna</text>
<text x="931" y="801.5" font-size="46" font-weight="bold" font-style="italic" fill="#1068c8" stroke="#1068c8" stroke-width="3.4" stroke-linejoin="round" textLength="184" lengthAdjust="spacingAndGlyphs">pack</text>
</g>
<text x="830.4" y="825.8" font-size="11" font-weight="bold" fill="#1030a0" stroke="#1030a0" stroke-width=".5" textLength="81.5" lengthAdjust="spacing">CHASSIS</text>
<text x="955.3" y="825.8" font-size="11" font-weight="bold" fill="#1030a0" stroke="#1030a0" stroke-width=".5" textLength="159.5" lengthAdjust="spacing">DYNAMOMETERS</text>
<rect x="0" y="836.7" width="1152" height="28" fill="#d4d0c8"/>
<rect x="2" y="840" width="52" height="22" fill="#d4d0c8"/>
<path d="M2.5 861V840.5H53" stroke="#fff" fill="none"/><path d="M2.5 861.5H53.5V840" stroke="#404040" fill="none"/><path d="M3.5 860.5H52.5V841" stroke="#808080" fill="none"/>
<g transform="translate(4,843)"><path d="M1 3q3-2 6 0v5q-3-2-6 0z" fill="#e04020"/><path d="M8 3q3 2 6 0v5q-3 2-6 0z" fill="#40a040"/><path d="M1 9q3-2 6 0v5q-3-2-6 0z" fill="#3060d0"/><path d="M8 9q3 2 6 0v5q-3 2-6 0z" fill="#e8c020"/></g>
<text x="21.7" y="854.7" font-size="11.5" fill="#000" text-anchor="start" font-weight="bold" textLength="28.3" lengthAdjust="spacingAndGlyphs" >Start</text>
<rect x="59" y="840" width="160" height="22" fill="url(#chk)"/>
<path d="M59.5 862V840.5H219" stroke="#404040" fill="none"/><path d="M60.5 861V841.5H218" stroke="#808080" fill="none"/><path d="M59.5 861.5H218.5V840" stroke="#fff" fill="none"/>
<rect x="64" y="843" width="15" height="16" fill="#f4f4f4" stroke="#b0b0b0" stroke-width=".6"/><path d="M66 856l4-5l2 2l5-7" stroke="#7070b0" stroke-width="1.2" fill="none"/><path d="M66 845h11" stroke="#c04040" stroke-width="1.5"/>
<text x="83.7" y="854.7" font-size="11.5" fill="#000" text-anchor="start" font-weight="bold" textLength="55.2" lengthAdjust="spacingAndGlyphs" >Dynapack</text>
<rect x="222" y="840" width="159" height="22" fill="#d4d0c8"/>
<path d="M222.5 861V840.5H380" stroke="#fff" fill="none"/><path d="M222.5 861.5H380.5V840" stroke="#404040" fill="none"/><path d="M223.5 860.5H379.5V841" stroke="#808080" fill="none"/>
<path d="M226 850l7-3l8 2v3l-7 3l-8-2z" fill="#909090" stroke="#606060" stroke-width=".6"/><path d="M226 850l7-3l8 2l-7 3z" fill="#e0e0e0"/>
<text x="245.8" y="854.7" font-size="11.5" fill="#000" text-anchor="start" font-weight="normal" textLength="14" lengthAdjust="spacingAndGlyphs" >E:\</text>
<path d="M980.5 862V840.5H1150" stroke="#808080" fill="none"/><path d="M980.5 861.5H1150.5V840" stroke="#fff" fill="none"/>
<g transform="translate(983,843)"><path d="M2 3l4-3v2h4v3H6v2z" fill="#30b030"/><path d="M3 10l8-3l3 4l-8 4z" fill="#909890" stroke="#505850" stroke-width=".6"/></g>
<path d="M1008 843.5l6.5 2.5v5q0 5-6.5 8q-6.5-3-6.5-8v-5z" fill="#f0d020" stroke="#a08010" stroke-width=".8"/><rect x="1007.3" y="847" width="1.6" height="5" fill="#000"/><rect x="1007.3" y="853" width="1.6" height="1.6" fill="#000"/>
<rect x="1024" y="843" width="8" height="7" fill="#3050a0"/><rect x="1019" y="847" width="9" height="8" fill="#4060c0"/><path d="M1024 850l9 9M1033 850l-9 9" stroke="#e02020" stroke-width="2.6"/>
<path d="M1037 844v14l8-7z" fill="#e02020"/><path d="M1044 844l7 7l-7 7" stroke="#2020c0" stroke-width="2.4" fill="none"/>
<rect x="1055" y="842" width="16" height="16" fill="#e0e0e8"/><circle cx="1062" cy="848" r="2.5" fill="#3040c0"/><circle cx="1067" cy="846" r="2" fill="#3040c0"/><circle cx="1059" cy="853" r="2" fill="#c03030"/><rect x="1063" y="851" width="8" height="8" fill="#e02020"/><path d="M1065 853l4 4m0-4l-4 4" stroke="#fff" stroke-width="1.4"/>
<path d="M1082 843q-8 2-7 9q2 6 8 5l-1-3q-4 0-4-4q0-3 4-4z" fill="#108080"/><circle cx="1086" cy="846" r="1.5" fill="#e02040"/><circle cx="1088" cy="851" r="1.5" fill="#3050c0"/><circle cx="1086" cy="856" r="1.5" fill="#3050c0"/><circle cx="1083" cy="851" r="1.5" fill="#202020"/>
<text x="1098.7" y="855" font-size="11.5" fill="#000" text-anchor="start" font-weight="normal" textLength="38.8" lengthAdjust="spacingAndGlyphs" >2:21 PM</text>
</svg></body></html>
